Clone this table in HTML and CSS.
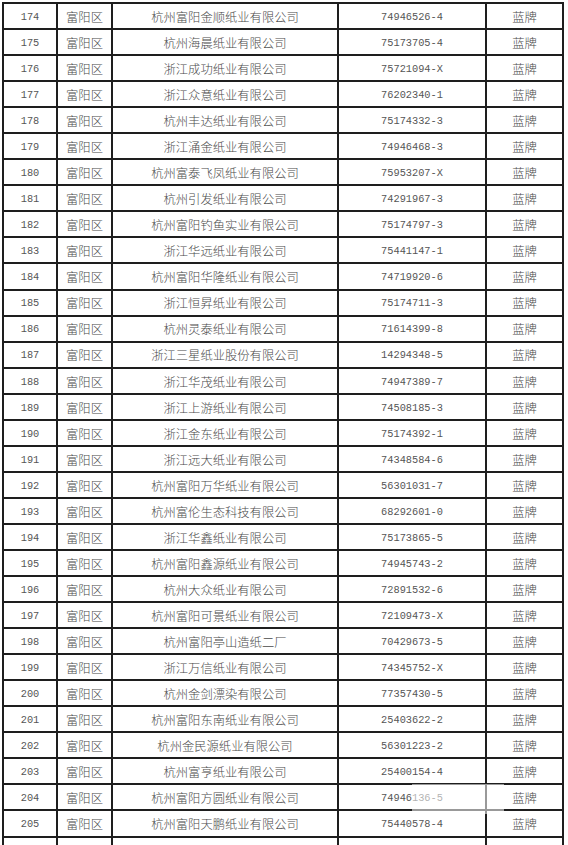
FILE: index.html
```html
<!DOCTYPE html>
<html lang="zh-CN">
<head>
<meta charset="utf-8">
<title>企业名单</title>
<link rel="stylesheet" href="styles.css">
</head>
<body>
<div class="sheet">
  <div class="grid">
    <div class="c n">174</div><div class="c">富阳区</div><div class="c">杭州富阳金顺纸业有限公司</div><div class="c n">74946526-4</div><div class="c">蓝牌</div>
    <div class="c n">175</div><div class="c">富阳区</div><div class="c">杭州海晨纸业有限公司</div><div class="c n">75173705-4</div><div class="c">蓝牌</div>
    <div class="c n">176</div><div class="c">富阳区</div><div class="c">浙江成功纸业有限公司</div><div class="c n">75721094-X</div><div class="c">蓝牌</div>
    <div class="c n">177</div><div class="c">富阳区</div><div class="c">浙江众意纸业有限公司</div><div class="c n">76202340-1</div><div class="c">蓝牌</div>
    <div class="c n">178</div><div class="c">富阳区</div><div class="c">杭州丰达纸业有限公司</div><div class="c n">75174332-3</div><div class="c">蓝牌</div>
    <div class="c n">179</div><div class="c">富阳区</div><div class="c">浙江涌金纸业有限公司</div><div class="c n">74946468-3</div><div class="c">蓝牌</div>
    <div class="c n">180</div><div class="c">富阳区</div><div class="c">杭州富泰飞凤纸业有限公司</div><div class="c n">75953207-X</div><div class="c">蓝牌</div>
    <div class="c n">181</div><div class="c">富阳区</div><div class="c">杭州引发纸业有限公司</div><div class="c n">74291967-3</div><div class="c">蓝牌</div>
    <div class="c n">182</div><div class="c">富阳区</div><div class="c">杭州富阳钓鱼实业有限公司</div><div class="c n">75174797-3</div><div class="c">蓝牌</div>
    <div class="c n">183</div><div class="c">富阳区</div><div class="c">浙江华远纸业有限公司</div><div class="c n">75441147-1</div><div class="c">蓝牌</div>
    <div class="c n">184</div><div class="c">富阳区</div><div class="c">杭州富阳华隆纸业有限公司</div><div class="c n">74719920-6</div><div class="c">蓝牌</div>
    <div class="c n">185</div><div class="c">富阳区</div><div class="c">浙江恒昇纸业有限公司</div><div class="c n">75174711-3</div><div class="c">蓝牌</div>
    <div class="c n">186</div><div class="c">富阳区</div><div class="c">杭州灵泰纸业有限公司</div><div class="c n">71614399-8</div><div class="c">蓝牌</div>
    <div class="c n">187</div><div class="c">富阳区</div><div class="c">浙江三星纸业股份有限公司</div><div class="c n">14294348-5</div><div class="c">蓝牌</div>
    <div class="c n">188</div><div class="c">富阳区</div><div class="c">浙江华茂纸业有限公司</div><div class="c n">74947389-7</div><div class="c">蓝牌</div>
    <div class="c n">189</div><div class="c">富阳区</div><div class="c">浙江上游纸业有限公司</div><div class="c n">74508185-3</div><div class="c">蓝牌</div>
    <div class="c n">190</div><div class="c">富阳区</div><div class="c">浙江金东纸业有限公司</div><div class="c n">75174392-1</div><div class="c">蓝牌</div>
    <div class="c n">191</div><div class="c">富阳区</div><div class="c">浙江远大纸业有限公司</div><div class="c n">74348584-6</div><div class="c">蓝牌</div>
    <div class="c n">192</div><div class="c">富阳区</div><div class="c">杭州富阳万华纸业有限公司</div><div class="c n">56301031-7</div><div class="c">蓝牌</div>
    <div class="c n">193</div><div class="c">富阳区</div><div class="c">杭州富伦生态科技有限公司</div><div class="c n">68292601-0</div><div class="c">蓝牌</div>
    <div class="c n">194</div><div class="c">富阳区</div><div class="c">浙江华鑫纸业有限公司</div><div class="c n">75173865-5</div><div class="c">蓝牌</div>
    <div class="c n">195</div><div class="c">富阳区</div><div class="c">杭州富阳鑫源纸业有限公司</div><div class="c n">74945743-2</div><div class="c">蓝牌</div>
    <div class="c n">196</div><div class="c">富阳区</div><div class="c">杭州大众纸业有限公司</div><div class="c n">72891532-6</div><div class="c">蓝牌</div>
    <div class="c n">197</div><div class="c">富阳区</div><div class="c">杭州富阳可景纸业有限公司</div><div class="c n">72109473-X</div><div class="c">蓝牌</div>
    <div class="c n">198</div><div class="c">富阳区</div><div class="c">杭州富阳亭山造纸二厂</div><div class="c n">70429673-5</div><div class="c">蓝牌</div>
    <div class="c n">199</div><div class="c">富阳区</div><div class="c">浙江万信纸业有限公司</div><div class="c n">74345752-X</div><div class="c">蓝牌</div>
    <div class="c n">200</div><div class="c">富阳区</div><div class="c">杭州金剑漂染有限公司</div><div class="c n">77357430-5</div><div class="c">蓝牌</div>
    <div class="c n">201</div><div class="c">富阳区</div><div class="c">杭州富阳东南纸业有限公司</div><div class="c n">25403622-2</div><div class="c">蓝牌</div>
    <div class="c n">202</div><div class="c">富阳区</div><div class="c">杭州金民源纸业有限公司</div><div class="c n">56301223-2</div><div class="c">蓝牌</div>
    <div class="c n">203</div><div class="c">富阳区</div><div class="c">杭州富亨纸业有限公司</div><div class="c n">25400154-4</div><div class="c">蓝牌</div>
    <div class="c n">204</div><div class="c">富阳区</div><div class="c">杭州富阳方圆纸业有限公司</div><div class="c n">74946136-5</div><div class="c">蓝牌</div>
    <div class="c n">205</div><div class="c">富阳区</div><div class="c">杭州富阳天鹏纸业有限公司</div><div class="c n">75440578-4</div><div class="c">蓝牌</div>
    <div class="c"></div><div class="c"></div><div class="c"></div><div class="c"></div><div class="c"></div>
  </div>
  <div class="mark"></div>
</div>
</body>
</html>
```

FILE: styles.css
```css
html, body {
  margin: 0;
  padding: 0;
  background: #fff;
  overflow: hidden;
}
body {
  width: 568px;
  height: 845px;
}
.sheet {
  position: relative;
  padding: 2px 0 0 2px;
}
.grid {
  display: grid;
  grid-template-columns: 52px 53px 224px 146px 75px;
  grid-auto-rows: 24.06px;
  gap: 2px;
  padding: 2px;
  width: max-content;
  background: #1e1e1e;
}
.c {
  background: #fff;
  display: flex;
  align-items: center;
  justify-content: center;
  padding-top: 2px;
  box-sizing: border-box;
  font-family: "Noto Sans CJK SC", "Noto Sans", sans-serif;
  font-size: 12.3px;
  font-weight: 300;
  color: #4a4a4a;
  white-space: nowrap;
  line-height: 1;
}
.n {
  font-family: "Liberation Mono", "DejaVu Sans Mono", monospace;
  font-size: 10.3px;
  font-weight: 400;
  color: #555;
}
.mark {
  position: absolute;
  left: 412px;
  top: 784px;
  width: 92px;
  height: 30px;
  background: rgba(255, 255, 255, 0.55);
}
```
